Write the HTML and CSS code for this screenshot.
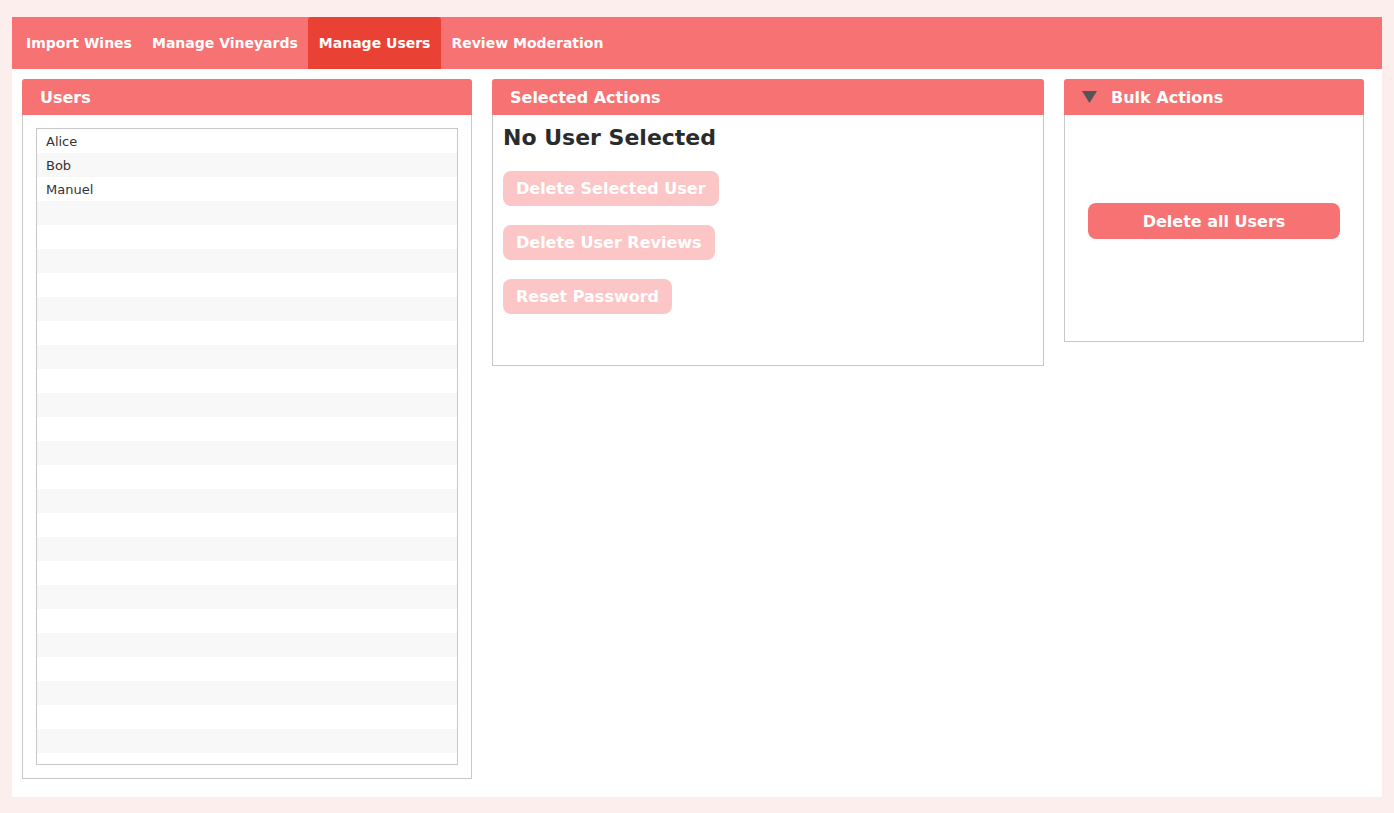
FILE: index.html
```html
<!DOCTYPE html>
<html>
<head>
<meta charset="utf-8">
<title>Manage Users</title>
<link rel="stylesheet" href="styles.css">
</head>
<body>
<div class="app">
  <nav class="nav">
    <a class="tab">Import Wines</a>
    <a class="tab">Manage Vineyards</a>
    <a class="tab active">Manage Users</a>
    <a class="tab">Review Moderation</a>
  </nav>
  <main class="content">
    <section class="panel users">
      <header class="panel-head">Users</header>
      <div class="panel-body users-body">
        <ul class="user-list">
          <li>Alice</li><li>Bob</li><li>Manuel</li>
          <li></li><li></li><li></li><li></li><li></li><li></li><li></li><li></li>
          <li></li><li></li><li></li><li></li><li></li><li></li><li></li><li></li>
          <li></li><li></li><li></li><li></li><li></li><li></li><li></li><li></li>
        </ul>
      </div>
    </section>
    <section class="panel selected">
      <header class="panel-head">Selected Actions</header>
      <div class="panel-body selected-body">
        <h2 class="sel-title">No User Selected</h2>
        <div class="btn-col">
          <button class="btn disabled">Delete Selected User</button>
          <button class="btn disabled">Delete User Reviews</button>
          <button class="btn disabled">Reset Password</button>
        </div>
      </div>
    </section>
    <section class="panel bulk">
      <header class="panel-head">
        <svg class="caret" width="15" height="12" viewBox="0 0 15 12"><polygon points="0,0 15,0 7.5,12" fill="#555555"/></svg>
        <span>Bulk Actions</span>
      </header>
      <div class="panel-body bulk-body">
        <button class="btn wide">Delete all Users</button>
      </div>
    </section>
  </main>
</div>
</body>
</html>
```
FILE: styles.css
```css
* { box-sizing: border-box; }
html, body { margin: 0; }
body {
  background: #fdeeee;
  padding: 17px 12px 16px;
  font-family: "DejaVu Sans", "Liberation Sans", sans-serif;
  color: #2b2b2b;
}
.app {
  background: #ffffff;
  height: 780px;
  display: flex;
  flex-direction: column;
}
.nav {
  height: 52px;
  background: #f77272;
  display: flex;
  align-items: stretch;
  padding-left: 4px;
}
.tab {
  display: flex;
  align-items: center;
  padding: 0 10px;
  color: #ffffff;
  font-weight: bold;
  font-size: 14px;
  cursor: pointer;
  border-radius: 3px 3px 0 0;
}
.tab.active {
  background: #e94235;
  padding: 0 11px;
}
.content {
  display: flex;
  align-items: flex-start;
  gap: 20px;
  padding: 10px;
}
.panel { display: flex; flex-direction: column; }
.users { width: 450px; }
.selected { width: 552px; }
.bulk { width: 300px; }
.panel-head {
  height: 36px;
  background: #f77272;
  color: #ffffff;
  font-weight: bold;
  font-size: 16px;
  display: flex;
  align-items: center;
  padding-left: 18px;
  border-radius: 3px 3px 0 0;
}
.panel-body {
  border: 1px solid #c8c8c8;
  border-top: none;
}
.users-body { padding: 13px; }
.user-list {
  list-style: none;
  margin: 0;
  padding: 0 0 11px;
  border: 1px solid #c8c8c8;
  height: 637px;
}
.user-list li {
  height: 24px;
  line-height: 24px;
  padding-top: 1px;
  font-size: 13px;
  padding-left: 9px;
  color: #333333;
}
.user-list li:nth-child(even) { background: #f8f8f8; }
.selected-body { padding: 11px 10px 51px; }
.sel-title {
  margin: 0 0 21px;
  font-size: 22px;
  line-height: 24px;
  font-weight: bold;
  color: #2b2b2b;
}
.btn-col {
  display: flex;
  flex-direction: column;
  align-items: flex-start;
  gap: 19px;
}
.btn {
  height: 35px;
  border: none;
  border-radius: 8px;
  padding: 0 13px;
  font-family: "DejaVu Sans", "Liberation Sans", sans-serif;
  font-weight: bold;
  font-size: 16px;
  color: #ffffff;
  background: #f77272;
}
.btn.disabled { background: #fcc6c6; }
.bulk-body { padding: 88px 23px 102px; }
.btn.wide { width: 100%; height: 36px; display: block; }
.caret { margin-right: 14px; flex: none; }
```
